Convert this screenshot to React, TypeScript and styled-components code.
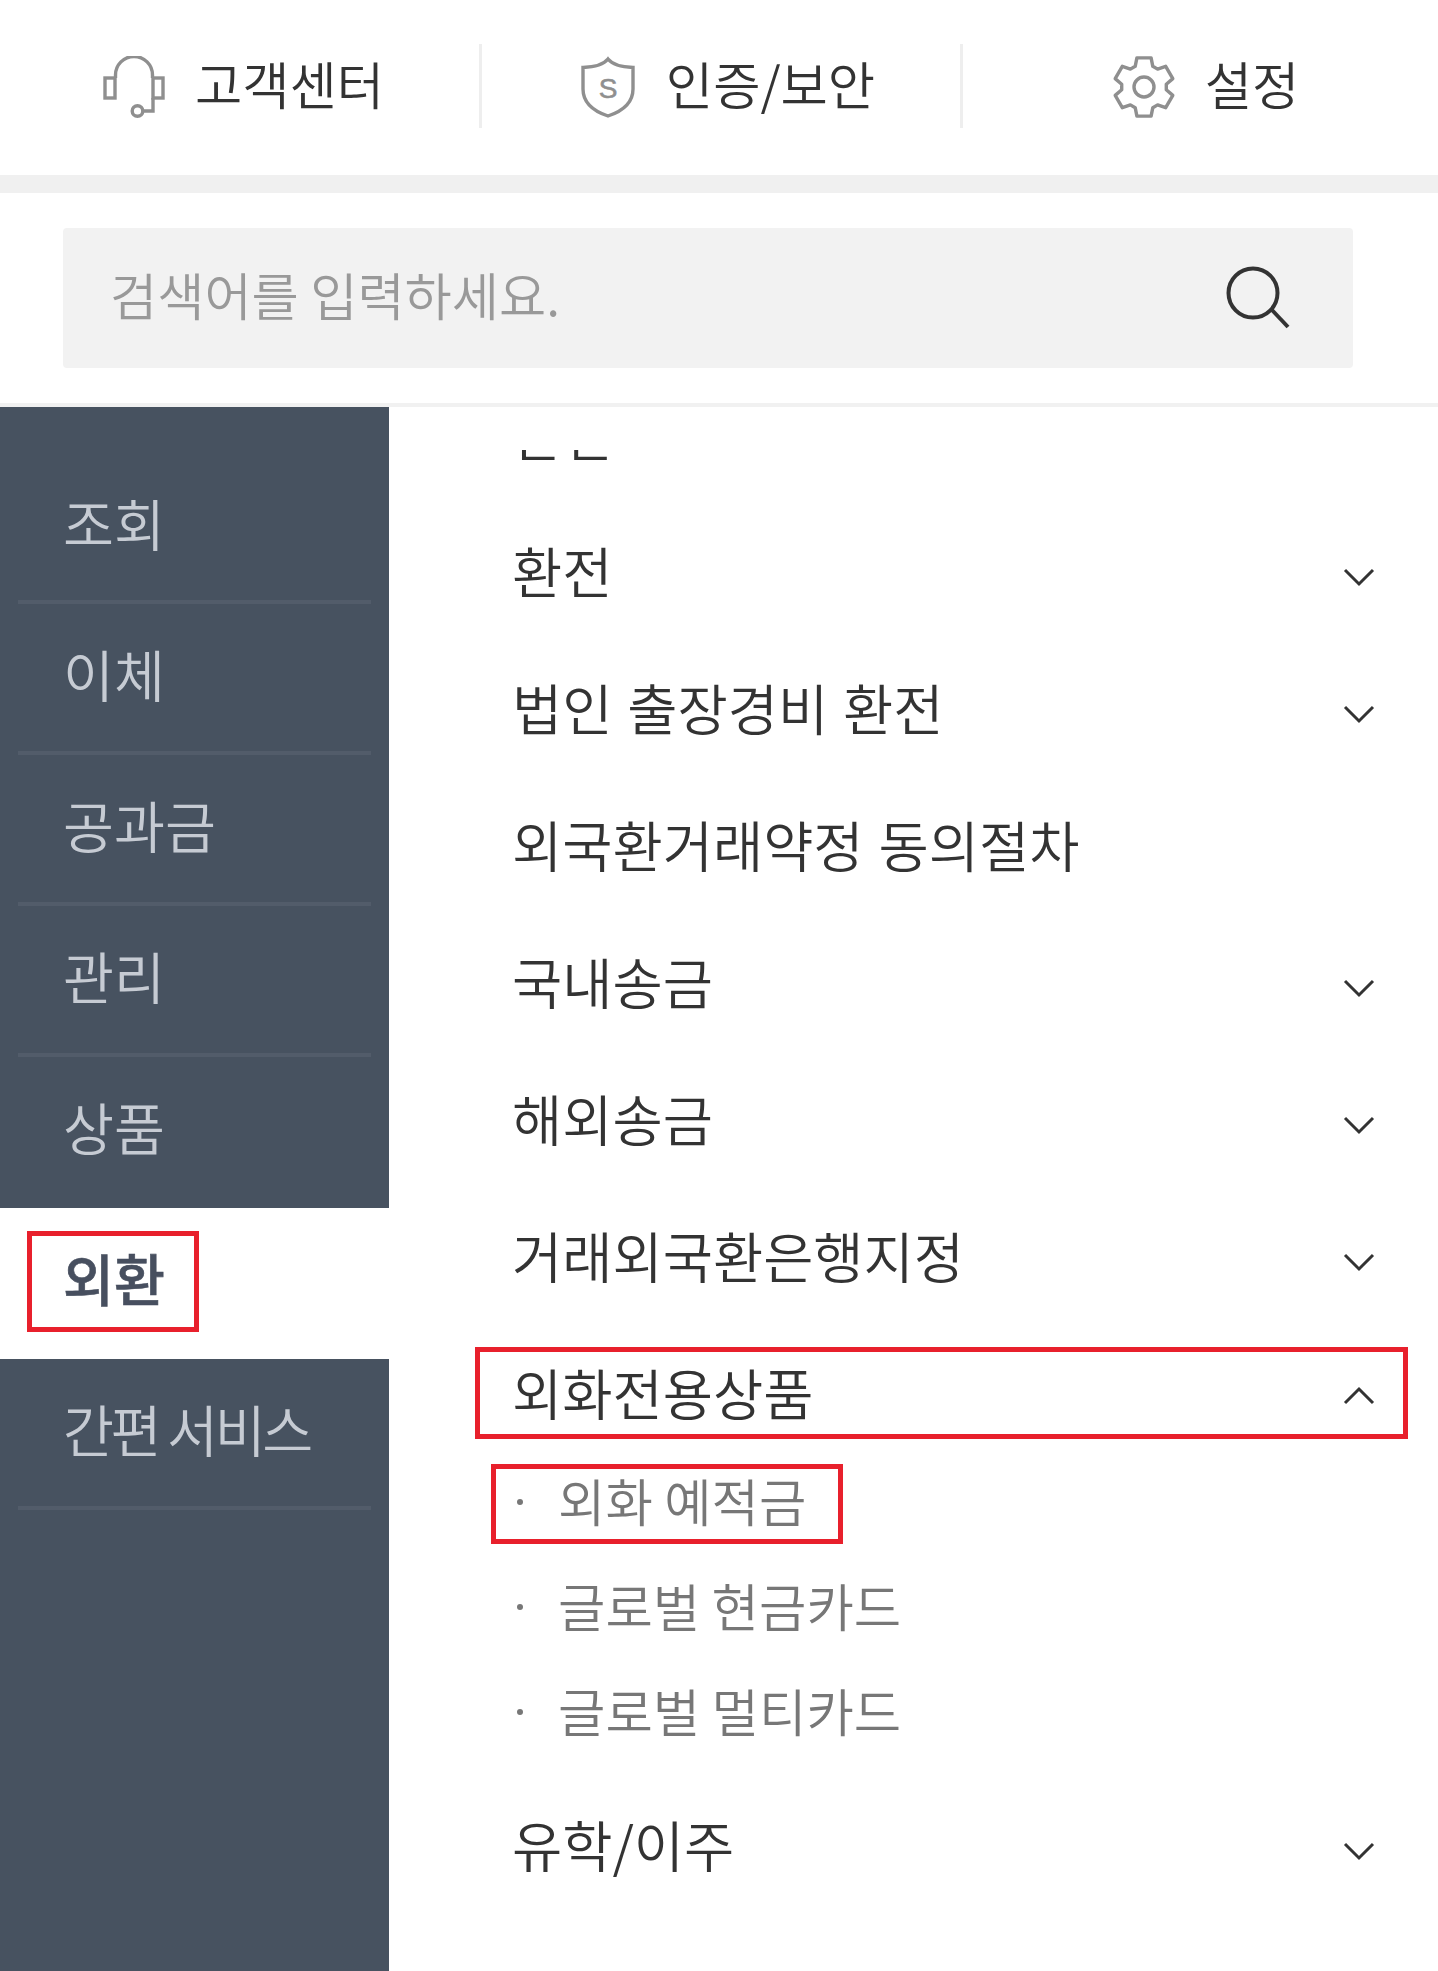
import React from 'react';
import styled, { createGlobalStyle } from 'styled-components';

const GlobalStyle = createGlobalStyle`
  html, body {
    margin: 0;
    padding: 0;
    background: #ffffff;
  }
  body {
    font-family: "Noto Sans CJK KR", "Noto Sans", sans-serif;
    font-weight: 350;
  }
`;

const Page = styled.div`
  width: 1438px;
  height: 1971px;
  display: flex;
  flex-direction: column;
  overflow: hidden;
`;

const TopBar = styled.div`
  height: 175px;
  flex: none;
  display: grid;
  grid-template-columns: 482px 481px 475px;
  align-items: center;
  background: #ffffff;
`;
const TopItem = styled.div<{ $divider?: boolean; $shift: number }>`
  height: 84px;
  margin-top: -4px;
  padding-left: ${(p) => p.$shift}px;
  box-sizing: border-box;
  display: flex;
  align-items: center;
  justify-content: center;
  gap: 30px;
  font-size: 51.4px;
  color: #333333;
  border-right: ${(p) => (p.$divider ? '3px solid #eeeeee' : 'none')};
`;
const TopLabel = styled.span`
  padding-bottom: 6px;
`;
const GreyBand = styled.div`
  height: 18px;
  flex: none;
  background: #f0f0f0;
`;

const SearchArea = styled.div`
  flex: none;
  padding: 35px 85px 35px 63px;
  border-bottom: 4px solid #f1f1f1;
`;
const SearchBox = styled.div`
  height: 140px;
  padding: 0 64px 0 47px;
  display: flex;
  align-items: center;
  justify-content: space-between;
  box-sizing: border-box;
  background: #f2f2f2;
  border-radius: 4px;
  font-size: 51.3px;
  color: #999999;
`;
const SearchHint = styled.span`
  padding-bottom: 10px;
`;

const Body = styled.div`
  flex: 1;
  display: flex;
  min-height: 0;
`;
const Sidebar = styled.ul`
  width: 389px;
  flex: none;
  margin: 0;
  padding: 46px 0 0;
  list-style: none;
  background: #475260;
`;
const SideItem = styled.li<{ $active?: boolean }>`
  position: relative;
  height: 151px;
  padding: 0 18px;
  box-sizing: border-box;
  font-size: 55.4px;
  background: ${(p) => (p.$active ? '#ffffff' : 'transparent')};
  color: ${(p) => (p.$active ? '#474f5f' : '#c6cbd3')};
  font-weight: ${(p) => (p.$active ? 500 : 350)};
  -webkit-text-stroke: ${(p) => (p.$active ? '0.6px #474f5f' : '0')};
`;
const SideLabel = styled.div<{ $line: boolean; $tight?: boolean }>`
  height: 100%;
  padding: 0 0 8px 45px;
  display: flex;
  align-items: center;
  box-sizing: border-box;
  border-bottom: 4px solid ${(p) => (p.$line ? '#525c6a' : 'transparent')};
  line-height: 1;
  letter-spacing: ${(p) => (p.$tight ? '-3.4px' : '0')};
`;
const Mark = styled.span`
  position: absolute;
  border: 5px solid #e8202c;
  box-sizing: border-box;
  pointer-events: none;
`;
const SideMark = styled(Mark)`
  left: 27px;
  top: 23px;
  width: 172px;
  height: 101px;
`;

const Panel = styled.div`
  flex: 1;
  margin-top: 43px;
  overflow: hidden;
  background: #ffffff;
`;
const MenuList = styled.ul`
  margin: -83px 0 0;
  padding: 0 63px 0 123px;
  list-style: none;
`;
const MenuRow = styled.li`
  position: relative;
  height: 137px;
  padding-bottom: 5px;
  box-sizing: border-box;
  display: flex;
  align-items: center;
  justify-content: space-between;
  font-size: 54.6px;
  word-spacing: 2.7px;
  color: #333333;
  line-height: 1;
`;
const RowMark = styled(Mark)`
  left: -37px;
  right: -33px;
  top: 21px;
  height: 92px;
`;
const SubList = styled.ul`
  margin: -13px 0 13px;
  padding: 0;
  list-style: none;
`;
const SubRow = styled.li`
  position: relative;
  height: 105px;
  padding: 0 0 5px 46px;
  box-sizing: border-box;
  display: flex;
  align-items: center;
  font-size: 51.5px;
  color: #777777;
  line-height: 1;
  &::before {
    content: '';
    position: absolute;
    left: 5px;
    top: 50%;
    width: 6px;
    height: 6px;
    margin-top: -4px;
    border-radius: 50%;
    background: #777777;
  }
`;
const SubMark = styled(Mark)`
  left: -21px;
  top: 14px;
  width: 352px;
  height: 80px;
`;

const IconSvg = styled.svg`
  flex: none;
  display: block;
  fill: none;
  stroke: #8f8f8f;
  stroke-width: 3.4;
  margin-top: 2px;
`;
const DarkIconSvg = styled.svg`
  flex: none;
  display: block;
  fill: none;
  stroke: #333333;
  overflow: visible;
`;
const ChevronSvg = styled(DarkIconSvg)`
  margin-top: 13px;
`;
const ShieldLetter = styled.text`
  fill: #8f8f8f;
  stroke: #8f8f8f;
  stroke-width: 0.6;
  font-family: "Liberation Sans", sans-serif;
  font-size: 28px;
  text-anchor: middle;
`;

const HeadsetIcon = () => (
  <IconSvg width={62} height={62} viewBox="-1 -1 62 62">
    <rect x={1} y={21} width={10} height={20} />
    <rect x={49} y={21} width={10} height={20} />
    <path d="M11.5 21v-3a18.5 18.5 0 0 1 37 0v3" />
    <path d="M49 41v13H39" />
    <circle cx={33.5} cy={54} r={5.3} />
  </IconSvg>
);

const ShieldIcon = () => (
  <IconSvg width={56} height={62} viewBox="-1 -1 56 62">
    <path d="M27 2c4 5 13 8 25 8.5V32c0 13-10 22-25 27C12 54 2 45 2 32V10.5C14 10 23 7 27 2Z" />
    <ShieldLetter x={27} y={41}>S</ShieldLetter>
  </IconSvg>
);

// six teeth, flat on top and bottom
const gearPath = () => {
  const pts: string[] = [];
  for (let i = 0; i < 6; i++) {
    const a = (i * Math.PI) / 3 - Math.PI / 2;
    const at = (r: number, d: number) =>
      `${(31 + r * Math.cos(a + d)).toFixed(1)} ${(32 + r * Math.sin(a + d)).toFixed(1)}`;
    pts.push(at(22.5, -0.4), at(30, -0.24), at(30, 0.24), at(22.5, 0.4));
  }
  return `M${pts.join('L')}Z`;
};

const GearIcon = () => (
  <IconSvg width={62} height={64} viewBox="0 0 62 64" strokeLinejoin="round">
    <path d={gearPath()} />
    <circle cx={31} cy={32} r={10} />
  </IconSvg>
);

const SearchIcon = () => (
  <DarkIconSvg width={64} height={64} viewBox="0 0 64 64" strokeWidth={4}>
    <circle cx={28} cy={27} r={24.5} />
    <path d="M47 44l16 17" />
  </DarkIconSvg>
);

const Chevron = ({ up }: { up?: boolean }) => (
  <ChevronSvg width={32} height={20} viewBox="0 0 32 20" strokeWidth={3}>
    <path d={up ? 'M2 14L16 0l14 14' : 'M2 3l14 14L30 3'} />
  </ChevronSvg>
);

const sideItems = ['조회', '이체', '공과금', '관리', '상품', '외환', '간편 서비스'];
const menuTop = ['환전', '환전', '법인 출장경비 환전', '외국환거래약정 동의절차', '국내송금', '해외송금', '거래외국환은행지정'];
const subItems = ['외화 예적금', '글로벌 현금카드', '글로벌 멀티카드'];

const App = () => {
  return (
    <Page>
      <GlobalStyle />
      <TopBar>
        <TopItem $divider $shift={8}><HeadsetIcon /><TopLabel>고객센터</TopLabel></TopItem>
        <TopItem $divider $shift={13}><ShieldIcon /><TopLabel>인증/보안</TopLabel></TopItem>
        <TopItem $shift={11}><GearIcon /><TopLabel>설정</TopLabel></TopItem>
      </TopBar>
      <GreyBand />
      <SearchArea>
        <SearchBox>
          <SearchHint>검색어를 입력하세요.</SearchHint>
          <SearchIcon />
        </SearchBox>
      </SearchArea>
      <Body>
        <Sidebar>
          {sideItems.map((label) => {
            const active = label === '외환';
            return (
              <SideItem key={label} $active={active}>
                <SideLabel $line={!active && label !== '상품'} $tight={label === '간편 서비스'}>{label}</SideLabel>
                {active && <SideMark />}
              </SideItem>
            );
          })}
        </Sidebar>
        <Panel>
          <MenuList>
            {menuTop.map((label, i) => (
              <MenuRow key={i}>
                {label}
                {label !== '외국환거래약정 동의절차' && <Chevron />}
              </MenuRow>
            ))}
            <MenuRow>
              외화전용상품
              <Chevron up />
              <RowMark />
            </MenuRow>
            <SubList>
              {subItems.map((label, i) => (
                <SubRow key={label}>
                  {label}
                  {i === 0 && <SubMark />}
                </SubRow>
              ))}
            </SubList>
            <MenuRow>
              유학/이주
              <Chevron />
            </MenuRow>
          </MenuList>
        </Panel>
      </Body>
    </Page>
  );
};

export default App;
